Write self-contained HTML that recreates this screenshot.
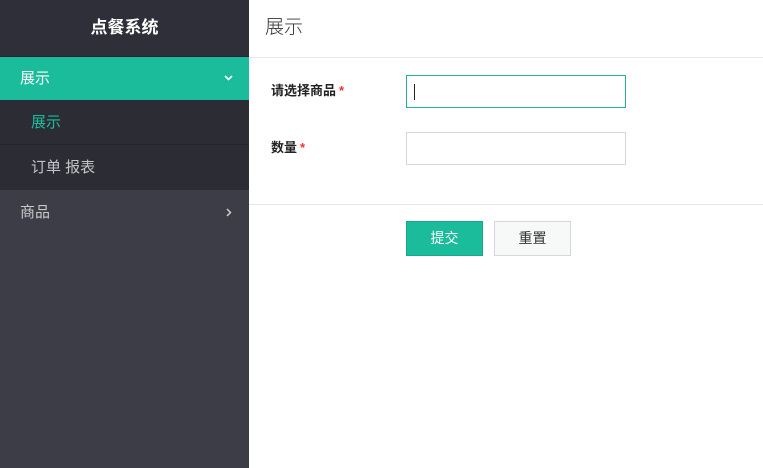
<!DOCTYPE html>
<html><head><meta charset="utf-8"><style>
*{margin:0;padding:0;box-sizing:border-box}
body{width:763px;height:468px;overflow:hidden;font-family:"Liberation Sans","Noto Sans CJK SC",sans-serif;background:#fff;position:relative}
.side{position:absolute;left:0;top:0;width:249px;height:468px;background:#3d3d48}
.logo{height:57px;background:#2f2f3a;color:#fff;font-weight:bold;font-size:17px;text-align:center;line-height:56px;border-bottom:1px solid #26262e}
.act{height:43px;background:#1abc9c;color:#fff;font-size:15px;line-height:43px;padding-left:20px;position:relative}
.sub{background:#2c2c35}
.sub div{height:45px;line-height:45px;padding-left:31px;font-size:15px;color:#c4c4c4}
.sub div.on{color:#1abc9c;border-bottom:1px solid #25252d}
.item{height:45px;line-height:45px;padding-left:20px;font-size:15px;color:#c8c8c8;position:relative}
.arr{position:absolute;right:16px}
.main{position:absolute;left:249px;top:0;right:0;height:468px}
.title{height:58px;border-bottom:1px solid #e8e8e8;font-size:19px;color:#333;padding-left:16px;line-height:56px;font-weight:300}
.lbl{position:absolute;left:22px;font-size:13px;font-weight:bold;color:#222}
.lbl span{color:#e33;margin-left:3px}
.inp{position:absolute;left:157px;width:220px;height:33px;border:1px solid #d6d6dc;background:#fff}
.line{position:absolute;left:0;right:0;top:204px;border-top:1px solid #e6e6e6}
.btn{position:absolute;top:221px;width:77px;height:35px;font-size:14px;text-align:center;line-height:33px}
</style></head><body>
<div class="side">
<div class="logo">点餐系统</div>
<div class="act">展示<svg class="arr" style="top:18px" width="9" height="6" viewBox="0 0 9 6"><path d="M1 1L4.5 4.5L8 1" stroke="#fff" stroke-width="1.6" fill="none"/></svg></div>
<div class="sub"><div class="on">展示</div><div>订单 报表</div></div>
<div class="item">商品<svg class="arr" style="top:18px;right:17px" width="6" height="9" viewBox="0 0 6 9"><path d="M1 1L4.5 4.5L1 8" stroke="#ccc" stroke-width="1.5" fill="none"/></svg></div>
</div>
<div class="main">
<div class="title">展示</div>
<div class="lbl" style="top:80px">请选择商品<span>*</span></div>
<div class="inp" style="top:75px;border-color:#1fb493"><div style="position:absolute;left:7px;top:8px;width:1px;height:16px;background:#222"></div></div>
<div class="lbl" style="top:137px">数量<span>*</span></div>
<div class="inp" style="top:132px"></div>
<div class="line"></div>
<div class="btn" style="left:157px;background:#1abc9c;border:1px solid #17a98b;color:#fff">提交</div>
<div class="btn" style="left:245px;background:#f7f8f8;border:1px solid #d6d6dc;color:#333">重置</div>
</div>
</body></html>
